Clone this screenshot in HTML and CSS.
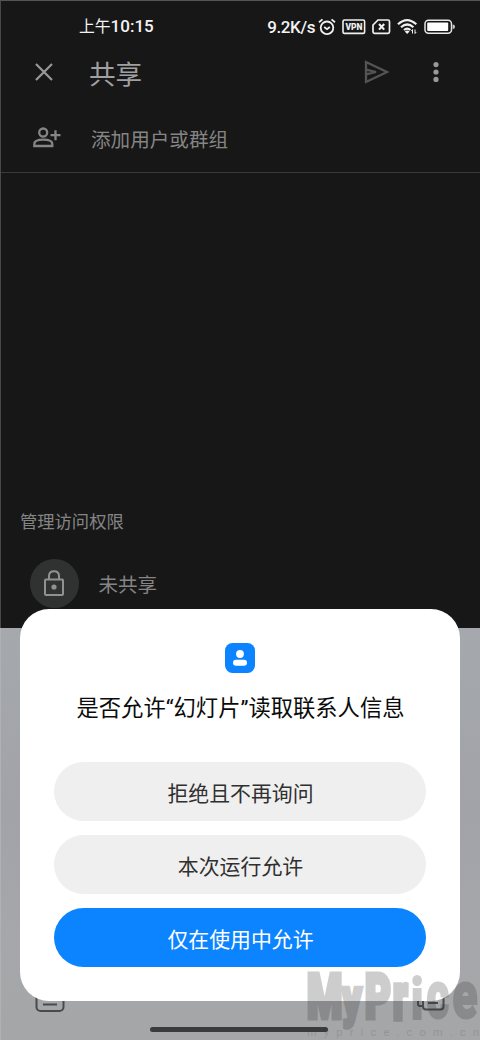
FILE: index.html
```html
<!DOCTYPE html>
<html lang="zh-CN">
<head>
<meta charset="utf-8">
<title>共享</title>
<link rel="stylesheet" href="styles.css">
</head>
<body>
<div class="screen">
  <div class="share">
    <div class="status">
      <span class="clock">上午<b>10:15</b></span>
      <div class="indicators">
        <span class="speed">9.2K/s</span>
        <svg class="alarm" width="18" height="18" viewBox="0 0 18 18" fill="none" stroke="#f0f0f0" stroke-width="1.8"><circle cx="9" cy="9.8" r="6.3"/><path d="M1 4.2 4.5 1.4M17 4.2l-3.5-2.8M6.2 9l2.8 2.2L11.8 9"/></svg>
        <svg class="vpn" width="24" height="16" viewBox="0 0 24 16"><rect x="1" y="1" width="21.6" height="13.4" rx="1.5" fill="none" stroke="#f0f0f0" stroke-width="1.6"/><text x="3.4" y="11.2" textLength="17" lengthAdjust="spacingAndGlyphs">VPN</text></svg>
        <svg class="sim" width="19" height="16" viewBox="0 0 19 16" fill="none" stroke="#f0f0f0" stroke-width="1.7"><path d="M6 1h10q1.500 0 1.500 1.500v10.300q0 1.500-1.500 1.500H2.500Q1 14.300 1 12.800V6z"/><path d="m7 5 5.200 5.600M12.200 5 7 10.600" stroke-width="2.100"/></svg>
        <svg class="wifi" width="21" height="17" viewBox="0 0 21 17" fill="none" stroke="#f0f0f0" stroke-width="2.200"><path d="M1 6.300q9-8.400 18.300 0M4 9.300q6.200-5.600 12.400 0M7 12q3.200-2.800 6.400 0"/><path d="m7.800 13.400 2.400 2.600 2.400-2.600q-2.400-1.600-4.800 0z" fill="#f0f0f0" stroke="none"/><path d="M15.500 11.500v4M18 11.500v4m-3.700-2.400 1.200-1.500m3.700 2.400L18 15.500" stroke-width="1"/></svg>
        <svg class="battery" width="32" height="16" viewBox="0 0 32 16"><rect x="1" y="1.200" width="26.500" height="13" rx="3.500" fill="none" stroke="#e8e8e8" stroke-width="1.500"/><rect x="3.200" y="3.500" width="21" height="8.500" rx="1" fill="#fff"/><path d="M28.700 5.500q2.300 0 2.300 2.200t-2.300 2.300z" fill="#ccc"/></svg>
      </div>
    </div>
    <header class="toolbar">
      <svg width="18" height="18" viewBox="0 0 18 18" fill="none" stroke="#999" stroke-width="2.200"><path d="m1 1 16 16M17 1 1 17"/></svg>
      <h1>共享</h1>
      <svg class="send" width="26" height="24" viewBox="0 0 26 24" fill="none" stroke="#545454" stroke-width="2.300"><path d="M2 2v20l21-10zM2 9.700 12 12 2 14.300"/></svg>
      <svg class="more" width="6" height="20" viewBox="0 0 6 20" fill="#999"><circle cx="3" cy="2.600" r="2.600"/><circle cx="3" cy="10" r="2.600"/><circle cx="3" cy="17.400" r="2.600"/></svg>
    </header>
    <div class="add">
      <svg width="28" height="21" viewBox="0 0 28 21" fill="none" stroke="#858585" stroke-width="2.300"><circle cx="10.200" cy="5.500" r="4"/><path d="M1.300 19v-2q0-4.400 9-4.400t9 4.400v2zM22.500 3.200v10M17.500 8.200h10"/></svg>
      <span>添加用户或群组</span>
    </div>
    <section class="access">
      <h2>管理访问权限</h2>
      <div class="access-row">
        <div class="lock"><svg width="20" height="27" viewBox="0 0 20 27" fill="none" stroke="#919191" stroke-width="2"><rect x="1" y="9.500" width="18" height="15.500" rx="1"/><path d="M5 9.500V6q0-4.800 5-4.800T15 6v3.500"/><circle cx="10" cy="17" r="2.600" fill="#919191" stroke="none"/></svg></div>
        <span>未共享</span>
      </div>
    </section>
  </div>
  <div class="keyboard">
    <svg class="key-left" width="30" height="24" viewBox="0 0 30 24" fill="none" stroke="#494a4d" stroke-width="2"><rect x="1.500" y="-3" width="27" height="22" rx="4"/><path d="M8 12.500h14"/></svg>
    <svg class="key-right" width="29" height="24" viewBox="0 0 29 24" fill="none" stroke="#494a4d" stroke-width="2"><path d="M7 14H4q-2 0-2-2V-2"/><rect x="7" y="-3" width="20.500" height="20.500" rx="3"/><path d="M12 11h10"/></svg>
    <div class="home-bar"></div>
  </div>
  <div class="dialog">
    <svg class="contact" width="30" height="30" viewBox="0 0 30 30"><rect width="30" height="30" rx="7.500" fill="#0d84ff"/><circle cx="15" cy="11" r="3.900" fill="#fff"/><rect x="8" y="16.700" width="14" height="6" rx="3" fill="#fff"/></svg>
    <p class="question">是否允许“幻灯片”读取联系人信息</p>
    <div class="actions">
      <button>拒绝且不再询问</button>
      <button>本次运行允许</button>
      <button class="primary">仅在使用中允许</button>
    </div>
  </div>
  <svg class="watermark" width="178" height="75" viewBox="0 0 178 75">
    <g class="brand">
      <text transform="translate(5 52.500) scale(.65 1)">M</text>
      <text transform="translate(40 50.500) scale(.61 .88)">y</text>
      <text transform="translate(63 52.500) scale(.64 1)">P</text>
      <text transform="translate(91 53.500) scale(.62 1.050)">r</text>
      <text class="light" transform="translate(109 53.500) scale(.72 .92)">i</text>
      <text class="light" transform="translate(124.500 53) scale(.7 1.070)">c</text>
      <text class="light" transform="translate(150.500 53) scale(.74 1.070)">e</text>
    </g>
    <text class="site" x="5" y="71" textLength="172">myprice.com.cn</text>
  </svg>
</div>
</body>
</html>
```
FILE: styles.css
```css
* { box-sizing: border-box; }
body { margin: 0; font-family: Roboto, "Noto Sans CJK SC", sans-serif; }
svg { display: block; flex: none; }
h1, h2, p { margin: 0; font-weight: 400; }
.screen { position: relative; width: 480px; height: 1040px; overflow: hidden; display: flex; flex-direction: column; }
.share { height: 628px; background: #171717; border-top: 1px solid #555; border-left: 1px solid #484848; display: flex; flex-direction: column; }
.status { height: 43px; padding: 8px 24px 0 78px; display: flex; justify-content: space-between; align-items: center; color: #f3f3f3; }
.clock { font-size: 15.8px; line-height: 24px; white-space: nowrap; }
.clock b { font-size: 17px; font-weight: 500; }
.indicators { display: flex; align-items: center; }
.speed { font-size: 17px; font-weight: 500; letter-spacing: -.4px; line-height: 24px; margin-right: 3px; }
.alarm { margin-right: 6px; }
.vpn { margin-right: 6px; }
.vpn text { font: 900 9px Roboto, sans-serif; fill: #f0f0f0; }
.sim { margin-right: 6px; }
.wifi { margin-right: 6px; }
.toolbar { height: 56px; padding: 0 41px 0 34px; display: flex; align-items: center; color: #a0a0a0; }
.toolbar h1 { font-size: 26.600px; line-height: 36px; margin: 5px 0 0 36px; }
.send { margin-left: auto; margin-right: 43px; }
.add { height: 73px; padding: 5px 0 0 32px; display: flex; align-items: center; gap: 30px; border-bottom: 1px solid #3a3a3a; font-size: 19.600px; color: #858585; }
.add svg { margin-bottom: 2px; }
.access { padding: 335px 0 0 19px; color: #858585; }
.access h2 { font-size: 17.300px; line-height: 28px; }
.access-row { margin-top: 23px; padding-left: 9.500px; display: flex; align-items: center; gap: 20px; font-size: 19.500px; }
.lock { width: 49px; height: 49px; border-radius: 50%; background: #303131; display: grid; place-items: center; }
.keyboard { height: 412px; padding: 364px 35px 0 34px; border-left: 1px solid #afb1b3; background: linear-gradient(#a5a8ad 0, #a1a3a9 45%, #a6a7aa 75%, #a5a6a8 100%); display: grid; grid-template-columns: 30px 1fr 29px; align-content: start; }
.key-right { grid-column: 3; }
.home-bar { grid-column: 1 / 4; justify-self: center; width: 178px; height: 5px; border-radius: 3px; background: #3b3b3c; margin: 11px 2px 0 0; }
.dialog { position: absolute; left: 20px; top: 609px; width: 440px; height: 392px; padding: 34px 34px 0; border-radius: 29px; background: #fff; display: flex; flex-direction: column; align-items: center; }
.question { font-size: 22.300px; line-height: 34px; margin-top: 18px; padding-left: 1px; color: #0b0b0b; white-space: nowrap; }
.actions { width: 372px; margin-top: 37px; display: flex; flex-direction: column; gap: 14.500px; }
.actions button { height: 58.500px; padding: 1px 0 0 1px; border: 0; border-radius: 30px; background: #efefef; color: #303030; font: 400 20.900px Roboto, "Noto Sans CJK SC", sans-serif; }
.actions .primary { background: #0d84ff; color: #fff; }
.watermark { position: absolute; left: 302px; top: 965px; }
.brand { opacity: .24; font: 900 62px Roboto, sans-serif; fill: #333; stroke: #333; stroke-width: 5; }
.brand .light { stroke-width: 2; }
.site { font: 400 11px Roboto, sans-serif; fill: #333; opacity: .15; }
```
